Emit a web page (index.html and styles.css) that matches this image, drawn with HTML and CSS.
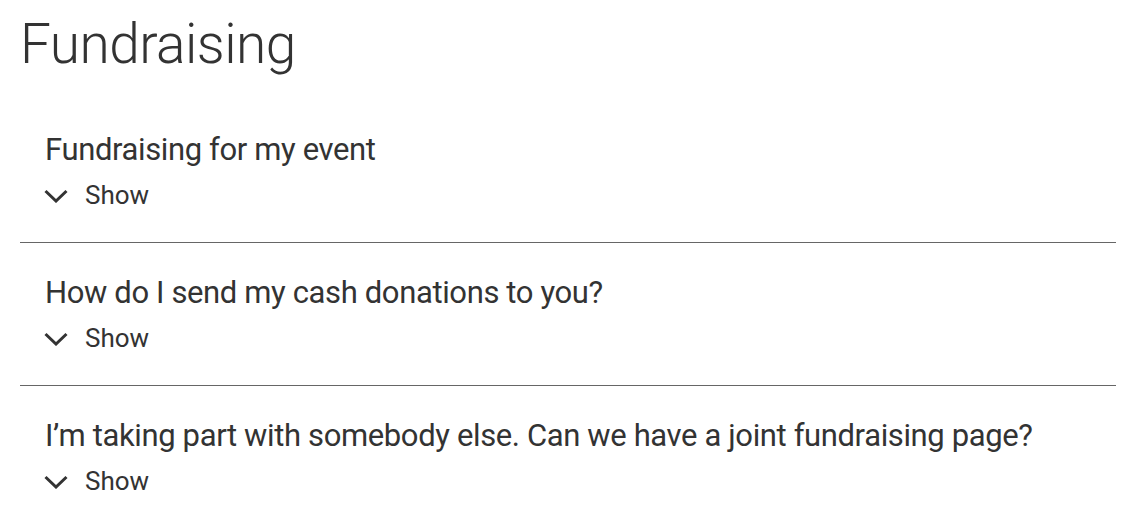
FILE: index.html
```html
<!DOCTYPE html>
<html lang="en">
<head>
<meta charset="utf-8">
<link rel="stylesheet" href="styles.css">
</head>
<body>
<main class="page">
  <h1 class="title">Fundraising</h1>
  <ul class="faq">
    <li class="item">
      <h2 class="question">Fundraising for my event</h2>
      <button class="toggle"><svg class="chev" viewBox="0 0 24 14" width="24" height="14"><path d="M1.5 2 L12 12 L22.5 2" fill="none" stroke="#333" stroke-width="3"/></svg><span>Show</span></button>
    </li>
    <li class="item">
      <h2 class="question">How do I send my cash donations to you?</h2>
      <button class="toggle"><svg class="chev" viewBox="0 0 24 14" width="24" height="14"><path d="M1.5 2 L12 12 L22.5 2" fill="none" stroke="#333" stroke-width="3"/></svg><span>Show</span></button>
    </li>
    <li class="item">
      <h2 class="question">I’m taking part with somebody else. Can we have a joint fundraising page?</h2>
      <button class="toggle"><svg class="chev" viewBox="0 0 24 14" width="24" height="14"><path d="M1.5 2 L12 12 L22.5 2" fill="none" stroke="#333" stroke-width="3"/></svg><span>Show</span></button>
    </li>
  </ul>
</main>
</body>
</html>
```

FILE: styles.css
```css
* { box-sizing: border-box; }
body {
  margin: 0;
  background: #fff;
  color: #333;
  font-family: Roboto, "Liberation Sans", sans-serif;
}
.page {
  padding: 12px 7px 0 20px;
}
.title {
  margin: 0;
  font-weight: 300;
  font-size: 55px;
  line-height: 64px;
  letter-spacing: -0.55px;
}
.faq {
  list-style: none;
  margin: 24px 0 0;
  padding: 0;
}
.item {
  padding: 32px 0 32px 25px;
  border-bottom: 1px solid #666;
}
.item:last-child { border-bottom: none; }
.question {
  margin: 0;
  font-weight: 400;
  font-size: 31px;
  line-height: 36px;
  letter-spacing: -0.37px;
}
.toggle {
  display: flex;
  align-items: center;
  gap: 17px;
  margin-top: 12px;
  padding: 0;
  border: 0;
  background: none;
  color: #333;
  font-family: inherit;
  font-size: 26px;
  line-height: 30px;
  font-weight: 400;
}
.chev { display: block; margin-left: -1px; margin-top: 2px; }
```
